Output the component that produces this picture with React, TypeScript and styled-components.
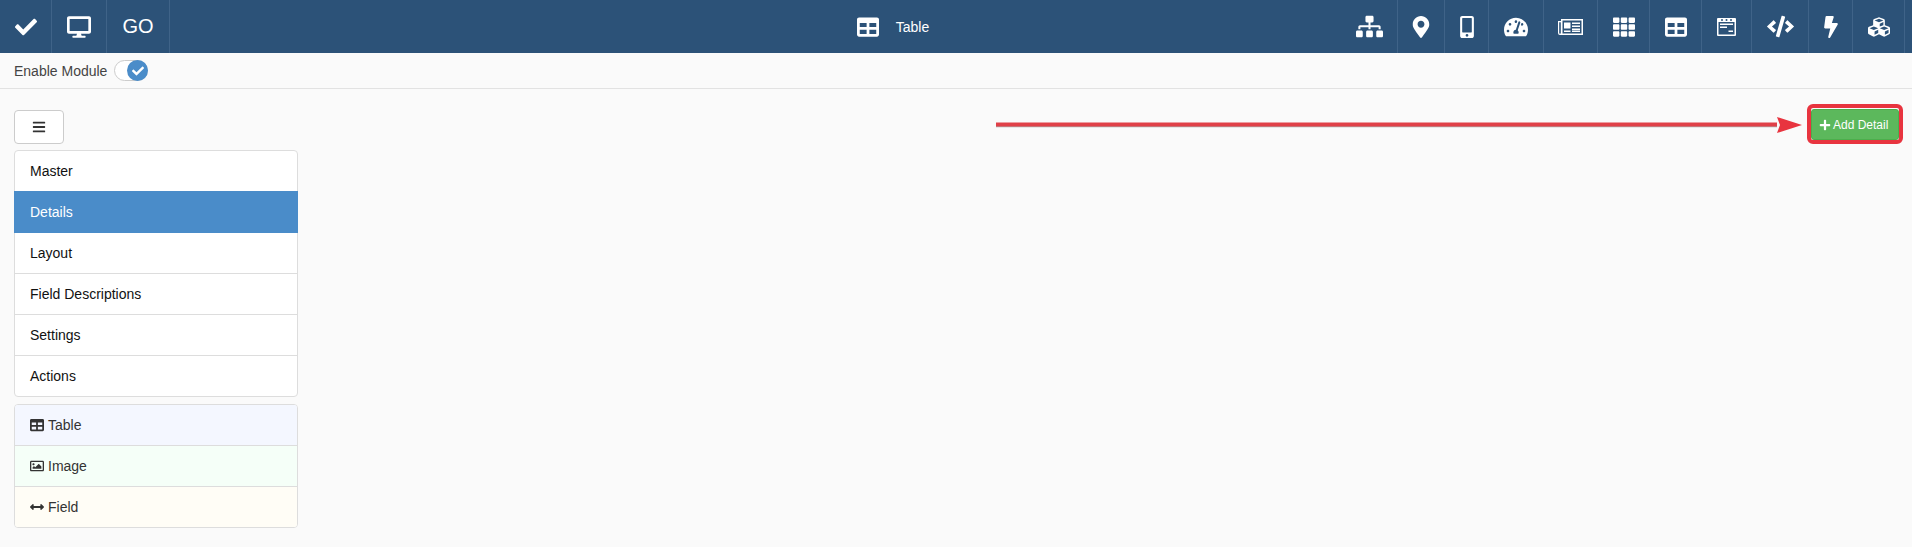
import React from 'react';
import styled, { createGlobalStyle } from 'styled-components';
import {
  FaBars, FaBolt, FaCheck, FaCode, FaCubes, FaDesktop,
  FaMapMarkerAlt, FaMobileAlt, FaPlus, FaRegImage, FaSitemap, FaTable,
  FaTachometerAlt, FaTh, FaArrowsAltH,
} from 'react-icons/fa';

const GlobalStyle = createGlobalStyle`
  html, body { margin: 0; padding: 0; background: #fafafa; }
  body { font-family: "Liberation Sans", Arial, sans-serif; font-size: 14px; color: #333; }
`;

const Page = styled.div`
  position: relative;
  width: 1912px;
  height: 547px;
  overflow: hidden;
`;

const TopBar = styled.header`
  height: 53px;
  background: #2c5278;
  color: #fff;
  display: grid;
  grid-template-columns: 1fr auto 1fr;
  align-items: stretch;
`;

const Group = styled.div<{ $end?: boolean }>`
  display: flex;
  justify-content: ${p => (p.$end ? 'flex-end' : 'flex-start')};
  padding-right: ${p => (p.$end ? '7px' : '0')};
`;

const Cell = styled.div<{ $w: number; $size?: number }>`
  width: ${p => p.$w}px;
  box-sizing: border-box;
  display: flex;
  align-items: center;
  justify-content: center;
  border-right: 1px solid #3f6388;
  font-size: ${p => p.$size ?? 22}px;
`;

const Title = styled.div`
  display: flex;
  align-items: center;
  gap: 17px;
  font-size: 14px;
  padding-right: 126px;
  svg { font-size: 22px; }
`;

const ModuleBar = styled.div`
  height: 35px;
  border-bottom: 1px solid #e2e2e2;
  display: flex;
  align-items: center;
  padding-left: 14px;
  gap: 7px;
  color: #444;
`;

const Toggle = styled.div`
  width: 32px;
  height: 19px;
  background: #fff;
  border: 1px solid #ccc;
  border-radius: 11px;
  display: flex;
  justify-content: flex-end;
  align-items: center;
`;

const Knob = styled.div`
  width: 21px;
  height: 21px;
  margin-right: -1px;
  background: #4a8cc9;
  border-radius: 50%;
  color: #fff;
  display: flex;
  align-items: center;
  justify-content: center;
  font-size: 12px;
`;

const Content = styled.main`
  padding: 21px 14px 0;
`;

const Side = styled.aside`
  width: 284px;
`;

const MenuButton = styled.button`
  display: flex;
  align-items: center;
  justify-content: center;
  width: 50px;
  height: 34px;
  padding: 0;
  background: #fff;
  border: 1px solid #ccc;
  border-radius: 4px;
  color: #333;
  font-size: 14px;
  margin-bottom: 6px;
`;

const List = styled.div`
  background: #fff;
  border: 1px solid #ddd;
  border-radius: 4px;
  margin-bottom: 7px;
`;

const Item = styled.div<{ $bg?: string }>`
  height: 41px;
  box-sizing: border-box;
  padding: 0 15px;
  display: flex;
  align-items: center;
  gap: 4px;
  color: #333;
  background: ${p => p.$bg ?? 'transparent'};
  border-bottom: 1px solid #ddd;
  svg { font-size: 14px; }
  &:first-child { border-radius: 3px 3px 0 0; }
  &:last-child { border-bottom: 0; height: 40px; border-radius: 0 0 3px 3px; }
`;

const MenuItem = styled(Item)<{ $active?: boolean }>`
  color: ${p => (p.$active ? '#fff' : '#111')};
  &:first-child { height: 40px; border-bottom: 0; }
  ${p => p.$active && `
    background: #4a8cc9;
    margin: 0 -1px;
    padding: 0 16px;
    border-bottom: 0;
    height: 42px;
  `}
`;

const AddButton = styled.button`
  position: absolute;
  left: 1811px;
  top: 109px;
  width: 88px;
  height: 31px;
  padding: 0 0 0 1px;
  border: 1px solid #4cae4c;
  border-radius: 3px;
  background: #5cb85c;
  color: #fff;
  font: 12px "Liberation Sans", Arial, sans-serif;
  display: flex;
  align-items: center;
  justify-content: flex-start;
  padding-left: 7px;
  gap: 2px;
  svg { font-size: 12px; }
`;

const Highlight = styled.div`
  position: absolute;
  left: 1807px;
  top: 104px;
  width: 96px;
  height: 40px;
  box-sizing: border-box;
  border: 4px solid #e8343f;
  border-radius: 6px;
`;

const ArrowLine = styled.svg`
  position: absolute;
  left: 990px;
  top: 112px;
`;

const WindowIcon = () => (
  <svg width="19" height="18" viewBox="0 0 19 18" fill="#fff">
    <path fillRule="evenodd" d="M1 0h17a1 1 0 0 1 1 1v16a1 1 0 0 1-1 1H1a1 1 0 0 1-1-1V1a1 1 0 0 1 1-1zm.5 4v12.500h16V4z" />
    <path d="M3 5.500h13v1.500H3zM3 8.500h7V10H3zM11.500 12.500H16V14h-4.500z" />
    <circle cx="5" cy="2" r="1" fill="#2c5278" />
    <circle cx="9.500" cy="2" r="1" fill="#2c5278" />
    <circle cx="14" cy="2" r="1" fill="#2c5278" />
  </svg>
);

const NewsIcon = () => (
  <svg width="25" height="16" viewBox="0 0 25 16" fill="#fff">
    <path fillRule="evenodd" d="M0 2h3V0h22v16H2a2 2 0 0 1-2-2zM1.200 3.200V14a.800.800 0 0 0 1.600 0V3.200zM4.500 1.500V14.500h19v-13z" />
    <path d="M6 3.500h6.500v6H6zM14 3.500h8v1.500h-8zM14 6.500h8V8h-8zM14 9.500h8V11h-8zM6 11.500h6.500V13H6zM14 11.500h8V13h-8z" />
  </svg>
);

const rightIcons: [number, React.ReactNode][] = [
  [57, <FaSitemap size={27} />],
  [47, <FaMapMarkerAlt />],
  [44, <FaMobileAlt />],
  [55, <FaTachometerAlt size={24} />],
  [54, <NewsIcon />],
  [52, <FaTh />],
  [52, <FaTable />],
  [50, <WindowIcon />],
  [57, <FaCode size={27} />],
  [44, <FaBolt />],
  [52, <FaCubes />],
];

const menu = ['Master', 'Details', 'Layout', 'Field Descriptions', 'Settings', 'Actions'];

export default function App() {
  return (
    <Page>
      <GlobalStyle />
      <TopBar>
        <Group>
          <Cell $w={52}><FaCheck /></Cell>
          <Cell $w={55}><FaDesktop size={24} /></Cell>
          <Cell $w={63} $size={20}>GO</Cell>
        </Group>
        <Title><FaTable />Table</Title>
        <Group $end>
          {rightIcons.map(([w, icon], idx) => <Cell key={idx} $w={w}>{icon}</Cell>)}
        </Group>
      </TopBar>
      <ModuleBar>
        Enable Module
        <Toggle><Knob><FaCheck /></Knob></Toggle>
      </ModuleBar>
      <Content>
        <Side>
          <MenuButton><FaBars /></MenuButton>
          <List>
            {menu.map(m => <MenuItem key={m} $active={m === 'Details'}>{m}</MenuItem>)}
          </List>
          <List>
            <Item $bg="#f4f7ff"><FaTable />Table</Item>
            <Item $bg="#f5fff8"><FaRegImage />Image</Item>
            <Item $bg="#fffdf6"><FaArrowsAltH />Field</Item>
          </List>
        </Side>
      </Content>
      <ArrowLine width="815" height="30" viewBox="0 0 815 30">
        <path d="M6 14.500h781" stroke="#aaa" strokeWidth="1.500" />
        <path d="M6 12.500h781" stroke="#e04048" strokeWidth="4" />
        <path d="M787 5l25 8-25 8 3-8z" fill="#e8343f" />
      </ArrowLine>
      <AddButton><FaPlus />Add Detail</AddButton>
      <Highlight />
    </Page>
  );
}
